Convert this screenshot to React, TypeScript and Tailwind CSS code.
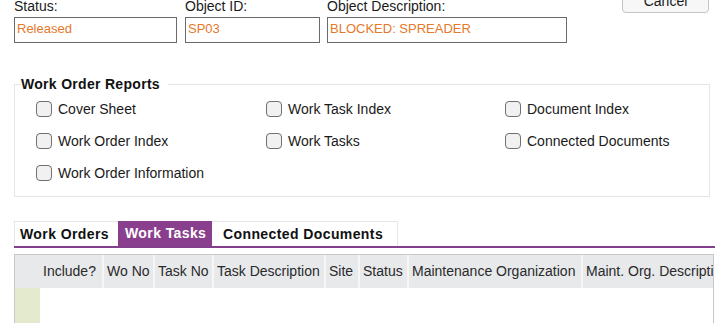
import React from "react";

const reports = [
  "Cover Sheet",
  "Work Task Index",
  "Document Index",
  "Work Order Index",
  "Work Tasks",
  "Connected Documents",
  "Work Order Information",
];

const columns = [
  { label: "Include?", w: "w-[62px]" },
  { label: "Wo No", w: "w-[51px]" },
  { label: "Task No", w: "w-[59px]" },
  { label: "Task Description", w: "w-[112px]" },
  { label: "Site", w: "w-[34px]" },
  { label: "Status", w: "w-[49px]" },
  { label: "Maintenance Organization", w: "w-[174px]" },
  { label: "Maint. Org. Description", w: "w-[160px]" },
];

function Field({ label, value, width }: { label: string; value: string; width: string }) {
  return (
    <div className={`flex flex-col ${width}`}>
      <span className="text-[14px] leading-[16px] text-[#1a1a1a]">{label}</span>
      <div className="mt-[3px] h-[26px] border border-[#6a6a6a] pl-[2px] pt-[3px] text-[13px] leading-[16px] text-[#e5782a]">
        {value}
      </div>
    </div>
  );
}

function Check({ label }: { label: string }) {
  return (
    <label className="flex h-[32px] items-center gap-[6px] text-[14px] text-[#1a1a1a]">
      <span className="h-[16px] w-[16px] shrink-0 rounded-[4px] border border-[#707070] bg-[#f1f1f1]" />
      {label}
    </label>
  );
}

export default function App() {
  return (
    <div
      className="h-[323px] w-[719px] overflow-hidden bg-white"
      style={{ fontFamily: '"Liberation Sans", Arial, sans-serif' }}
    >
      {/* Header fields */}
      <div className="-mt-[2px] flex items-start pl-[14px] pr-[10px]">
        <Field label="Status:" value="Released" width="w-[163px]" />
        <div className="w-[8px]" />
        <Field label="Object ID:" value="SP03" width="w-[135px]" />
        <div className="w-[7px]" />
        <Field label="Object Description:" value="BLOCKED: SPREADER" width="w-[240px]" />
        <button className="-mt-[9px] ml-auto h-[24px] w-[87px] rounded-[4px] border border-[#c4c4c4] bg-[#f7f7f7] text-[14px] leading-[16px] text-[#1a1a1a]">
          Cancel
        </button>
      </div>

      {/* Work Order Reports */}
      <fieldset className="ml-[14px] mt-[32px] w-[696px] border border-[#e6e6e6] pb-[7px] pl-[6px]">
        <legend className="pr-[8px] text-[14px] leading-[18px] font-bold tracking-[0.3px] text-[#111]">
          Work Order Reports
        </legend>
        <div className="ml-[15px] grid grid-cols-[230px_239px_1fr]">
          {reports.map((r) => (
            <Check key={r} label={r} />
          ))}
        </div>
      </fieldset>

      {/* Tabs */}
      <div className="ml-[14px] mt-[24px] flex w-[701px] items-end border-b-2 border-[#833f8b] text-[14px] font-bold tracking-[0.4px]">
        <div className="flex h-[25px] w-[104px] items-center border-l border-t border-[#e6e6e6] pl-[5px] text-[#111]">
          Work Orders
        </div>
        <div className="flex h-[25px] w-[94px] items-center bg-[#8a3f8e] pl-[7px] text-white">Work Tasks</div>
        <div className="flex h-[25px] w-[186px] items-center border-r border-t border-[#e6e6e6] pl-[11px] text-[#111]">
          Connected Documents
        </div>
      </div>

      {/* Grid */}
      <div className="ml-[14px] mt-[6px] w-[700px] overflow-hidden border-l border-r border-t border-[#c8c8c8]">
        <div className="flex h-[33px] bg-[#e8e9eb] text-[14px] leading-[16px] text-[#2a2a2a]">
          <div className="w-[25px] shrink-0" />
          {columns.map((c, i) => (
            <div
              key={c.label}
              className={`${c.w} shrink-0 whitespace-nowrap pl-[3px] pt-[8px] ${i > 0 ? "border-l-2 border-[#f6f6f7]" : ""}`}
            >
              {c.label}
            </div>
          ))}
        </div>
        <div className="flex h-[40px]">
          <div className="w-[25px] shrink-0 bg-[#e3eacd]" />
          <div className="flex-1 bg-white" />
        </div>
      </div>
    </div>
  );
}
